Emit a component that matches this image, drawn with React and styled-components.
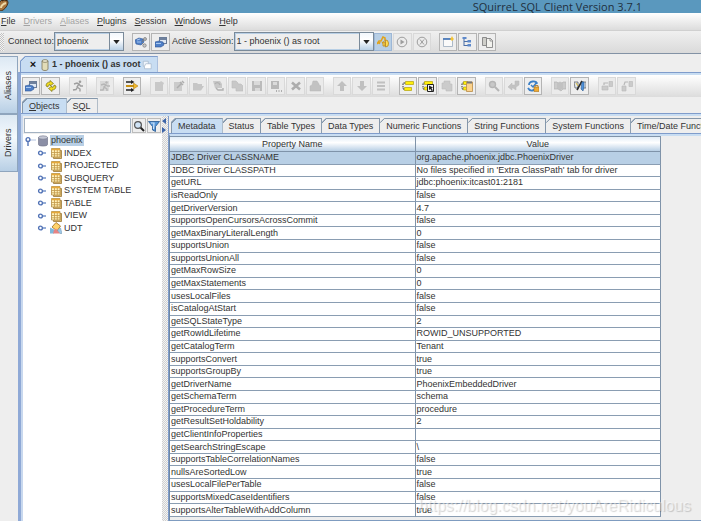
import React from "react";
import styled, { createGlobalStyle } from "styled-components";

const properties = [
  ["JDBC Driver CLASSNAME", "org.apache.phoenix.jdbc.PhoenixDriver"],
  ["JDBC Driver CLASSPATH", "No files specified in 'Extra ClassPath' tab for driver"],
  ["getURL", "jdbc:phoenix:itcast01:2181"],
  ["isReadOnly", "false"],
  ["getDriverVersion", "4.7"],
  ["supportsOpenCursorsAcrossCommit", "false"],
  ["getMaxBinaryLiteralLength", "0"],
  ["supportsUnion", "false"],
  ["supportsUnionAll", "false"],
  ["getMaxRowSize", "0"],
  ["getMaxStatements", "0"],
  ["usesLocalFiles", "false"],
  ["isCatalogAtStart", "false"],
  ["getSQLStateType", "2"],
  ["getRowIdLifetime", "ROWID_UNSUPPORTED"],
  ["getCatalogTerm", "Tenant"],
  ["supportsConvert", "true"],
  ["supportsGroupBy", "true"],
  ["getDriverName", "PhoenixEmbeddedDriver"],
  ["getSchemaTerm", "schema"],
  ["getProcedureTerm", "procedure"],
  ["getResultSetHoldability", "2"],
  ["getClientInfoProperties", ""],
  ["getSearchStringEscape", "\\"],
  ["supportsTableCorrelationNames", "false"],
  ["nullsAreSortedLow", "true"],
  ["usesLocalFilePerTable", "false"],
  ["supportsMixedCaseIdentifiers", "false"],
  ["supportsAlterTableWithAddColumn", "true"],
];

const menus = [
  { label: "File" },
  { label: "Drivers", disabled: true },
  { label: "Aliases", disabled: true },
  { label: "Plugins" },
  { label: "Session" },
  { label: "Windows" },
  { label: "Help" },
];

const metaTabs = [
  "Metadata",
  "Status",
  "Table Types",
  "Data Types",
  "Numeric Functions",
  "String Functions",
  "System Functions",
  "Time/Date Functions",
];

const nodes = ["INDEX", "PROJECTED", "SUBQUERY", "SYSTEM TABLE", "TABLE", "VIEW", "UDT"];

// "-" in front of the icon name marks a disabled button
const toolGroups = [
  ["properties", "refresh"],
  ["-run"],
  ["-runAll"],
  ["arrows"],
  ["-page", "-edit", "-folder", "-reload", "-files", "-save", "-saveAs", "-close", "-print"],
  ["-up", "-down", "-list"],
  ["bars", "barsCursor", "-barsPage", "barsPaste"],
  ["-search", "-swap", "commit"],
  ["-book", "pens"],
  ["-link", "-unlink"],
];

const shapes = {
  properties: (
    <>
      <rect x="4.500" y="1.500" width="7" height="6" fill="#dfe8f3" stroke="#6a7c98" />
      <path d="M5 3h6" stroke="#4a5f80" strokeWidth="1.500" />
      <path d="M0 6l4-1 4 1 1 3-3 2H0z" fill="#4f7fc6" stroke="#2f5596" strokeWidth=".6" />
      <path d="M1 7.500h5" stroke="#a9c8f0" />
    </>
  ),
  connect: (
    <>
      <path d="M0 4l4-2 4 1 1 3-3 3-5-1z" fill="#4f7fc6" stroke="#2f5596" strokeWidth=".6" />
      <path d="M2 4l3-1M2 6h4" stroke="#a9c8f0" />
      <path d="M7 6l2-3M7 7l2 2" stroke="#777" />
      <circle cx="10" cy="3" r="1.500" fill="#bbb" stroke="#777" strokeWidth=".7" />
      <circle cx="9.500" cy="9.500" r="1.700" fill="#c8c8c8" stroke="#777" strokeWidth=".7" />
    </>
  ),
  refresh: (
    <g fill="#f2dd1c" stroke="#777118" strokeWidth=".7">
      <path d="M1 6c0-3 2-4 4-4V.500L8.500 3.500 5 6V4.500C4 4.500 3 5 3 7z" />
      <path d="M11 6c0 3-2 4-4 4v1.500L3.500 8.500 7 6v1.500c1 0 2-.5 2-2.500z" />
    </g>
  ),
  run: (
    <>
      <circle cx="8" cy="1.800" r="1.300" fill="#8c8c8c" />
      <path d="M2 4l3-1 2 1-2 3 3 2v2.500M5.500 7L4 9.500 1 10M7 4l1.500 2H11" fill="none" stroke="#8c8c8c" strokeWidth="1.400" />
    </>
  ),
  runAll: (
    <>
      <path d="M1 1h9v10H1z" fill="#d4d4d4" />
      <circle cx="7.500" cy="2.500" r="1.200" fill="#aaa" />
      <path d="M2 5l3-1 2 1-2 2 3 2v2M5 7.500L4 10H1M7 5l1.500 1H11" fill="none" stroke="#aaa" strokeWidth="1.400" />
    </>
  ),
  arrows: (
    <>
      <path d="M0 2h6M0 10h6" stroke="#222" strokeWidth="1.300" />
      <path d="M5 0l3.500 2L5 4zM5 8l3.500 2L5 12z" fill="#222" />
      <path d="M0 6h9" stroke="#c79013" strokeWidth="2" />
      <path d="M7.500 3l4.500 3-4.500 3z" fill="#f0b92c" stroke="#a8770c" strokeWidth=".5" />
    </>
  ),
  page: <path d="M2 2h5l1-1 3 2-1 2v6H2z" fill="#c0c0c0" />,
  edit: (
    <>
      <path d="M1 2h8v9H1z" fill="#c4c4c4" />
      <path d="M4 8l5-5M7 2l3 3M9 1l2 2" fill="none" stroke="#a0a0a0" strokeWidth="1.500" />
    </>
  ),
  folder: <path d="M1 3h4l1 1h4v2h2l-3 4.500H1z" fill="#bdbdbd" />,
  reload: (
    <>
      <path d="M1 1h7l2 3v4H3z" fill="#c0c0c0" />
      <path d="M3 4c1-2 4-2 5 1M4 8l2 2h5V8" fill="none" stroke="#a4a4a4" strokeWidth="1.400" />
    </>
  ),
  files: <path d="M1 1h4l2 2v1h3l2 2v5H5V8H1z" fill="#c0c0c0" stroke="#b0b0b0" strokeWidth=".6" />,
  save: (
    <>
      <path d="M1 1h10v10H1z" fill="#b0b0b0" />
      <path d="M3 1h6v4H3zM4 8h5v3H4z" fill="#d6d6d6" />
    </>
  ),
  saveAs: (
    <>
      <path d="M1 1h8v8H1z" fill="#acacac" />
      <path d="M3 2h4v3H3z" fill="#d8d8d8" />
      <path d="M6 11h1M8.500 11h1M11 11h1" stroke="#888" strokeWidth="1.300" />
    </>
  ),
  close: <path d="M2 2.500l8 7M10 2.500l-8 7" stroke="#9e9e9e" strokeWidth="2.600" />,
  print: <path d="M3 5l1-4h4l2 3v1l2 1v5H1V6z" fill="#b9b9b9" stroke="#aaa" strokeWidth=".5" />,
  up: <path d="M6 1l5 5H8v5H4V6H1z" fill="#b6b6b6" />,
  down: <path d="M6 11L1 6h3V1h4v5h3z" fill="#b6b6b6" />,
  list: <path d="M2 2.500h8M2 6h8M2 9.500h8" stroke="#b6b6b6" strokeWidth="2.200" />,
  bars: (
    <>
      <path d="M3 3H1v6h2" fill="none" stroke="#333" strokeDasharray="1.500 1" />
      <path d="M3.500 1.500h8v3h-8zM2.500 7.500h7v3h-7z" fill="#ffee0a" stroke="#b1a20b" strokeWidth=".7" />
    </>
  ),
  barsCursor: (
    <>
      <path d="M3 3H1v6h2" fill="none" stroke="#333" strokeDasharray="1.500 1" />
      <path d="M2.500 1.500h8v3h-8zM2.500 7h5v3h-5z" fill="#ffee0a" stroke="#b1a20b" strokeWidth=".7" />
      <path d="M5.500 4.500h6v7h-6z" fill="#f4f4f4" stroke="#222" />
      <path d="M7 5.500l4 2-1.500.8L11 10.500 9.500 11 8.500 9 7 10z" fill="#222" />
    </>
  ),
  barsPage: <path d="M1 3h2V1h6v3h2v7H5V9H1z" fill="#c4c4c4" stroke="#b4b4b4" strokeWidth=".6" />,
  barsPaste: (
    <>
      <path d="M3 3H1v6h2" fill="none" stroke="#333" strokeDasharray="1.500 1" />
      <path d="M2.500 1.500h4v3h-4zM2.500 7h4v3h-4z" fill="#ffee0a" stroke="#b1a20b" strokeWidth=".7" />
      <path d="M5.500 2h6v9.500h-6z" fill="#fbd28c" stroke="#b98a44" strokeWidth=".8" />
      <path d="M6 1.500h5v2H6z" fill="#777" />
    </>
  ),
  search: (
    <>
      <circle cx="4.500" cy="4.500" r="3" fill="#c0c0c0" stroke="#a8a8a8" strokeWidth="1.400" />
      <path d="M7 7l4 4" stroke="#a8a8a8" strokeWidth="2" />
    </>
  ),
  swap: <path d="M0 7l4-4v2h3V1h4v4L8 7v3L5 8H4v2z" fill="#b9b9b9" stroke="#acacac" strokeWidth=".5" />,
  commit: (
    <>
      <path d="M2 5c0-4 7-5 8-1M1 8c2 4 7 3 8-1" fill="none" stroke="#3b7fc6" strokeWidth="1.800" />
      <path d="M4 5l2 2 4-5" fill="none" stroke="#3b7fc6" strokeWidth="1.500" />
      <path d="M7 7h5v4.500H7z" fill="#efab36" stroke="#a8721a" strokeWidth=".6" />
      <path d="M8 7V5.500h3V7" fill="none" stroke="#a8721a" strokeWidth=".8" />
    </>
  ),
  book: <path d="M0 2h3l1 1 2-1 2 1 1-1h3v7H9l-2 2-3-2H0zM4 3v6M6 3v7M8 3v6" fill="#c4c4c4" stroke="#a8a8a8" strokeWidth=".7" />,
  pens: (
    <>
      <path d="M0 2h4v6H1zM8 2h4v6H9z" fill="#dfe6ee" stroke="#555" strokeWidth=".7" />
      <path d="M8 1L3 10" stroke="#2c2c2c" strokeWidth="1.600" />
      <path d="M8 2h2v5l-1 4-2-2z" fill="#4f92dc" stroke="#26588f" strokeWidth=".6" />
      <path d="M2 3l2 3" stroke="#e4c23a" />
    </>
  ),
  link: (
    <>
      <path d="M1 6h6v4H1zM8 1.500h3.500v5H8z" fill="#c4c4c4" stroke="#acacac" strokeWidth=".6" />
      <path d="M3 5V3h4" fill="none" stroke="#acacac" strokeWidth="1.200" />
    </>
  ),
  unlink: (
    <>
      <path d="M1 6h4v5H1zM8 1.500h3.500v5H8z" fill="#c4c4c4" stroke="#acacac" strokeWidth=".6" />
      <path d="M3 5l1-3h3" fill="none" stroke="#acacac" strokeWidth="1.200" />
    </>
  ),
  keys: (
    <>
      <path d="M0 8l2-3h2l2-4 2 1v3M2 8l1-2M5 7l2-1" fill="none" stroke="#e0a31d" strokeWidth="1.600" />
      <path d="M6 6h2v4H6zM8.500 4l2 .5 1 2.500-.5 3-2.500 1z" fill="#ffdc52" stroke="#b9851a" strokeWidth=".8" />
    </>
  ),
  play: (
    <>
      <circle cx="6" cy="6" r="4.800" fill="none" stroke="#8a8a8a" />
      <path d="M4.500 3.500l4 2.500-4 2.500z" fill="#8a8a8a" />
    </>
  ),
  stop: (
    <>
      <circle cx="6" cy="6" r="4.800" fill="none" stroke="#8a8a8a" />
      <path d="M4 3.500l4 5M8 3.500l-4 5" stroke="#8a8a8a" />
    </>
  ),
  sheet: (
    <>
      <path d="M1.500 2.500h9v8h-9z" fill="#fafafa" stroke="#9aabbc" strokeWidth=".8" />
      <path d="M1 3h8" stroke="#4f7dbb" strokeWidth="1.800" />
      <path d="M10 0l1 2 1 1-1 1-1 1-1-1-1-1 1-1z" fill="#f6c332" />
    </>
  ),
  tree: (
    <>
      <path d="M3 2v8M3 5.500h4M3 9.500h4" fill="none" stroke="#4a6fa8" />
      <path d="M1.500 1h4v2h-4zM6.500 4h3.500v2.500H6.500zM6.500 8h3.500v2.500H6.500z" fill="#5f8acb" />
    </>
  ),
  copy: (
    <>
      <path d="M1.500 1.500h4v8h-4z" fill="#cfcfca" stroke="#777" strokeWidth=".8" />
      <path d="M5.500 2.500h4l2 2v7h-6z" fill="#f2f2ee" stroke="#777" strokeWidth=".8" />
      <path d="M9 2.500V5h2.500" fill="none" stroke="#777" strokeWidth=".7" />
    </>
  ),
  find: (
    <>
      <path d="M7.500 7.500l3.500 3.500" stroke="#222" strokeWidth="2" />
      <circle cx="5" cy="5" r="3.400" fill="#cfe3f6" stroke="#555" strokeWidth="1.200" />
    </>
  ),
  filter: (
    <>
      <path d="M.500 1.500h11L7.500 6.500v5l-3-1.500V6.500z" fill="#5596d8" stroke="#23558f" strokeWidth=".8" />
      <path d="M3 3h3L5.500 9" fill="none" stroke="#cfe4fa" strokeWidth="1.200" />
    </>
  ),
  database: (
    <>
      <path d="M1.500 2.500v7c0 2 9 2 9 0v-7z" fill="#8b8fa6" stroke="#74778c" strokeWidth=".7" />
      <ellipse cx="6" cy="2.500" rx="4.500" ry="1.700" fill="#c3c6d4" stroke="#74778c" strokeWidth=".6" />
    </>
  ),
  drum: (
    <>
      <path d="M3 2v8c0 2 6 2 6 0V2z" fill="#e2dcb8" stroke="#7b7558" strokeWidth=".8" />
      <ellipse cx="6" cy="2" rx="3" ry="1.300" fill="#f6f2dc" stroke="#7b7558" strokeWidth=".8" />
    </>
  ),
  tables: (
    <>
      <path d="M3.500 3.500h8v8h-8z" fill="#d9b66c" stroke="#9c7a38" strokeWidth=".8" />
      <path d="M1.500 1.500h8.500v8.500H1.500z" fill="#fff0b8" stroke="#ae8a42" strokeWidth=".8" />
      <path d="M1.500 2.500H10" stroke="#e8a93a" strokeWidth="1.500" />
      <path d="M1.500 5.500H10M1.500 7.800H10M4.500 3v7M7.300 3v7" stroke="#c39848" strokeWidth=".8" />
    </>
  ),
  type: (
    <>
      <path d="M0 5.500l4 2v4H0z" fill="#7eb9dc" />
      <path d="M2 5l4-4.500L10.500 4 7 9z" fill="#ffd36a" stroke="#a06b1c" strokeWidth=".8" />
      <path d="M4 8l2-1.500L10 11.500H3z" fill="#e88484" />
      <path d="M7.500 8l3-2 1.500 5.500h-2z" fill="#9dc8e8" stroke="#6d93ae" strokeWidth=".5" />
    </>
  ),
  handle: (
    <>
      <path d="M5 6h4" stroke="#7f9ccf" strokeWidth="1.600" />
      <circle cx="3.500" cy="6" r="1.900" fill="#fff" stroke="#5273b6" strokeWidth="1.400" />
    </>
  ),
  handleOpen: (
    <>
      <path d="M6 5h6" stroke="#b4c4e0" />
      <path d="M4 6v5" stroke="#5273b6" strokeWidth="1.400" />
      <circle cx="4" cy="4.500" r="1.900" fill="#fff" stroke="#5273b6" strokeWidth="1.400" />
    </>
  ),
  windows: (
    <>
      <path d="M1.500 1.500h6v6h-6z" fill="#eef4fb" stroke="#9eb0c6" strokeWidth=".8" />
      <path d="M4.500 4.500h6.500v6H3v-3z" fill="#fff" stroke="#9eb0c6" strokeWidth=".8" />
    </>
  ),
  squirrel: (
    <>
      <path d="M0 11c0-5 1-8 4-10 3-2 6 0 6 3-1 4-4 7-7 8z" fill="#a9763f" stroke="#4b3219" />
      <path d="M3 9c0-3 2-4 5-5" fill="none" stroke="#ecd9a8" strokeWidth="2" />
      <path d="M4 2c2-2 4-1 5 0" fill="none" stroke="#3b2613" strokeWidth="1.300" />
    </>
  ),
};

const Icon = ({ name, size = 12 }) => (
  <svg width={size} height={size} viewBox="0 0 12 12" aria-hidden="true">
    {shapes[name]}
  </svg>
);

const Combo = ({ id, value, wide }) => (
  <ComboBox $wide={wide}>
    <select id={id} defaultValue={value}>
      <option>{value}</option>
    </select>
    <span>
      <svg width="7" height="4" viewBox="0 0 8 5" aria-hidden="true">
        <path d="M0 0h8L4 5z" fill="#222" />
      </svg>
    </span>
  </ComboBox>
);

const Mnemonic = ({ text, at = 0 }) => (
  <>
    {text.slice(0, at)}
    <u>{text[at]}</u>
    {text.slice(at + 1)}
  </>
);

const App = () => {
  return (
    <Page>
      <GlobalStyle />
      <TitleBar>
        <Icon name="squirrel" />
        <h1>SQuirreL SQL Client Version 3.7.1</h1>
      </TitleBar>
      <MenuBar>
        {menus.map((menu) => (
          <button key={menu.label} type="button" disabled={menu.disabled}>
            <Mnemonic text={menu.label} />
          </button>
        ))}
      </MenuBar>
      <SessionBar>
        <Grip />
        <label htmlFor="alias">Connect to:</label>
        <Combo id="alias" value="phoenix" />
        <ButtonGroup>
          <ToolButton aria-label="Connect">
            <Icon name="connect" />
          </ToolButton>
          <ToolButton aria-label="Alias properties">
            <Icon name="properties" />
          </ToolButton>
        </ButtonGroup>
        <label htmlFor="session">Active Session:</label>
        <Combo id="session" value="1 - phoenix () as root" wide />
        <ButtonGroup $flush>
          <ToolButton $pressed aria-label="Auto commit">
            <Icon name="keys" />
          </ToolButton>
          <ToolButton disabled aria-label="Commit">
            <Icon name="play" />
          </ToolButton>
          <ToolButton disabled aria-label="Rollback">
            <Icon name="stop" />
          </ToolButton>
        </ButtonGroup>
        <ButtonGroup>
          <ToolButton aria-label="New SQL worksheet">
            <Icon name="sheet" />
          </ToolButton>
          <ToolButton aria-label="Object tree">
            <Icon name="tree" />
          </ToolButton>
          <ToolButton aria-label="Copy">
            <Icon name="copy" />
          </ToolButton>
        </ButtonGroup>
      </SessionBar>
      <Workspace>
        <Dock>
          <button type="button">Aliases</button>
          <button type="button">Drivers</button>
        </Dock>
        <Desktop>
          <FrameTabs>
            <FrameTab>
              <button type="button" aria-label="Close session">
                ×
              </button>
              <Icon name="drum" />
              <strong>1 - phoenix () as root</strong>
              <Icon name="windows" size={10} />
            </FrameTab>
          </FrameTabs>
          <Frame>
            <ToolBar>
              {toolGroups.map((group) => (
                <ButtonGroup key={group[0]} $flush>
                  {group.map((entry) => {
                    const name = entry.replace("-", "");
                    return (
                      <ToolButton
                        key={name}
                        aria-label={name}
                        disabled={entry.startsWith("-")}
                      >
                        <Icon name={name} />
                      </ToolButton>
                    );
                  })}
                </ButtonGroup>
              ))}
            </ToolBar>
            <TabRow>
              <Tab $active>
                <Mnemonic text="Objects" />
              </Tab>
              <Tab>
                <Mnemonic text="SQL" at={1} />
              </Tab>
            </TabRow>
            <SplitPane>
              <ObjectPane>
                <SearchRow>
                  <input type="text" aria-label="Find object" />
                  <button type="button" aria-label="Find">
                    <Icon name="find" />
                  </button>
                  <button type="button" aria-label="Filter">
                    <Icon name="filter" />
                  </button>
                </SearchRow>
                <Tree>
                  <TreeNode>
                    <Icon name="handleOpen" />
                    <Icon name="database" />
                    <NodeLabel $selected>phoenix</NodeLabel>
                  </TreeNode>
                  {nodes.map((node) => (
                    <TreeNode key={node} $child>
                      <Icon name="handle" />
                      <Icon name={node === "UDT" ? "type" : "tables"} />
                      <NodeLabel>{node}</NodeLabel>
                    </TreeNode>
                  ))}
                </Tree>
              </ObjectPane>
              <Divider>
                <svg width="4" height="16" viewBox="0 0 4 16" aria-hidden="true">
                  <path d="M4 0v6L0 3zM0 9v6l4-3z" fill="#3c64a8" />
                </svg>
              </Divider>
              <DetailPane>
                <TabRow $detail>
                  {metaTabs.map((tab, index) => (
                    <Tab key={tab} $active={index === 0}>
                      {tab}
                    </Tab>
                  ))}
                </TabRow>
                <TableArea>
                  <PropertyTable>
                    <thead>
                      <tr>
                        <th>Property Name</th>
                        <th>Value</th>
                      </tr>
                    </thead>
                    <tbody>
                      {properties.map(([name, value]) => (
                        <tr key={name}>
                          <td>{name}</td>
                          <td>{value}</td>
                        </tr>
                      ))}
                    </tbody>
                  </PropertyTable>
                </TableArea>
              </DetailPane>
            </SplitPane>
          </Frame>
        </Desktop>
      </Workspace>
      <Watermark>https://blog.csdn.net/youAreRidiculous</Watermark>
    </Page>
  );
};

const GlobalStyle = createGlobalStyle`
  * {
    box-sizing: border-box;
    margin: 0;
    padding: 0;
  }
  body {
    background: #fff;
    overflow: hidden;
  }
  body, button, input, select {
    font-family: "Liberation Sans", Arial, sans-serif;
    font-size: 9px;
    line-height: 11px;
    color: #333;
  }
  svg {
    display: block;
    flex: none;
  }
`;

const Page = styled.div`
  position: relative;
  height: 100vh;
  padding-bottom: 3px;
  display: flex;
  flex-direction: column;
  overflow: hidden;
`;

const TitleBar = styled.header`
  flex: none;
  height: 13px;
  padding-right: 59px;
  display: flex;
  align-items: center;
  justify-content: space-between;
  background: #5a98be;
  overflow: hidden;
  svg {
    margin-top: -4px;
    margin-left: -2px;
  }
  h1 {
    font: 400 11px/13px "Open Sans", "Noto Sans", sans-serif;
    color: #1f2f3d;
    margin-top: -1px;
  }
`;

const MenuBar = styled.nav`
  flex: none;
  height: 18px;
  padding-left: 1px;
  display: flex;
  align-items: center;
  gap: 8px;
  background: linear-gradient(#fff, #dcdcdc);
  border-bottom: 1px solid #d0d0d0;
  button {
    border: none;
    background: none;
    &:disabled {
      color: #a3a3a3;
    }
  }
`;

const SessionBar = styled.div`
  flex: none;
  height: 23px;
  padding-bottom: 1px;
  display: flex;
  align-items: center;
  background: linear-gradient(#f0f0f0, #dadada);
  border-bottom: 1px solid #8392a5;
  label {
    white-space: nowrap;
  }
`;

const Grip = styled.span`
  width: 4px;
  height: 18px;
  margin-right: 4px;
  background: repeating-conic-gradient(#c2c2c2 0 25%, #f4f4f4 0 50%) 0 0 / 2px 2px;
`;

const ComboBox = styled.div`
  display: grid;
  width: ${(props) => (props.$wide ? "140px" : "70px")};
  height: 19px;
  select {
    grid-area: 1 / 1;
    appearance: none;
    border: 1px solid #7a8a99;
    outline: 1px solid #b8cfe5;
    outline-offset: -2px;
    background: #eee;
    padding-left: 2px;
  }
  span {
    grid-area: 1 / 1;
    justify-self: end;
    width: 15px;
    display: flex;
    align-items: center;
    justify-content: center;
    border: 1px solid #7a8a99;
    background: linear-gradient(#f2f7fc, #fff 40%, #b8cfe5);
    pointer-events: none;
  }
`;

const ButtonGroup = styled.div`
  display: flex;
  gap: 1px;
  margin: ${(props) => (props.$flush ? "0" : "0 2px 0 8px")};
`;

const ToolButton = styled.button.attrs({ type: "button" })`
  width: 18px;
  height: 18px;
  display: flex;
  align-items: center;
  justify-content: center;
  border: 1px solid ${(props) => (props.$pressed ? "#9db7d6" : "#b4b4b4")};
  background: ${(props) => (props.$pressed ? "#b8cfe5" : "#eee")};
  &:nth-child(even) {
    width: 19px;
  }
  &:disabled {
    border-color: #d9d9d9;
    background: #ebebeb;
    svg {
      opacity: 0.8;
    }
  }
`;

const Workspace = styled.div`
  flex: 1;
  min-height: 0;
  display: flex;
  background: #eee;
`;

const Dock = styled.aside`
  flex: none;
  width: 18px;
  padding-top: 2px;
  button {
    display: block;
    width: 18px;
    height: 58px;
    writing-mode: vertical-rl;
    transform: rotate(180deg);
    border: 1px solid #8fa5bd;
    border-right: none;
    background: linear-gradient(#b8cfe5, #f4f9fd 60%, #dce8f3);
  }
`;

const Desktop = styled.main`
  flex: 1;
  min-width: 0;
  display: flex;
  flex-direction: column;
`;

const FrameTabs = styled.div`
  flex: none;
  height: 18px;
  padding: 2px 0 0 2px;
  display: flex;
`;

const FrameTab = styled.div`
  display: flex;
  align-items: center;
  gap: 1px;
  padding: 0 5px 0 7px;
  border: 1px solid #7f9ccb;
  border-bottom: none;
  background: linear-gradient(135deg, #7f9ccb 3px, transparent 3px), #c8ddf2;
  clip-path: polygon(5px 0, 100% 0, 100% 100%, 0 100%, 0 5px);
  button {
    width: 10px;
    border: none;
    background: none;
    font-size: 11px;
    font-weight: 700;
    color: #111;
  }
  strong {
    white-space: nowrap;
  }
`;

const Frame = styled.section`
  flex: 1;
  min-height: 0;
  display: flex;
  flex-direction: column;
  border-left: 3px solid #8fa9d6;
  border-top: 1px solid #7f9ccb;
`;

const ToolBar = styled.div`
  flex: none;
  height: 24px;
  padding: 0 0 1px 1px;
  display: flex;
  align-items: center;
  gap: 9px;
  border-top: 2px solid #c8ddf2;
  background: linear-gradient(#fff, #dcdcdc);
`;

const TabRow = styled.div`
  flex: none;
  height: ${(props) => (props.$detail ? "18px" : "17px")};
  padding: ${(props) => (props.$detail ? "2px 0 0 2px" : "1px 0 0 1px")};
  display: flex;
  overflow: hidden;
  background: #eee;
  border-bottom: 1px solid #7f9ccb;
`;

const Tab = styled.button.attrs({ type: "button" })`
  flex: none;
  padding: 0 6px;
  white-space: nowrap;
  border: 1px solid #8497ab;
  border-bottom: none;
  border-left-width: ${(props) => (props.$active ? "1px" : "0")};
  background: linear-gradient(135deg, #8497ab 3px, transparent 3px),
    ${(props) => (props.$active ? "#c8ddf2" : "#eee")};
  clip-path: polygon(4px 0, 100% 0, 100% 100%, 0 100%, 0 4px);
`;

const SplitPane = styled.div`
  flex: 1;
  min-height: 0;
  display: flex;
  border-top: 2px solid #c8ddf2;
  border-left: 2px solid #c8d8ee;
`;

const ObjectPane = styled.div`
  flex: none;
  width: 139px;
  background: #fff;
`;

const SearchRow = styled.div`
  display: flex;
  gap: 1px;
  height: 18px;
  padding: 2px 1px 1px;
  background: #eee;
  input {
    flex: 1;
    min-width: 0;
    border: 1px solid #a3b2c2;
    background: #fff;
  }
  button {
    width: 14px;
    display: flex;
    align-items: center;
    justify-content: center;
    border: 1px solid #bbb;
    background: #eee;
  }
`;

const Tree = styled.ul`
  list-style: none;
`;

const TreeNode = styled.li`
  height: 12px;
  display: flex;
  align-items: center;
  gap: 1px;
  padding-left: ${(props) => (props.$child ? "14px" : "1px")};
  &:nth-child(odd) {
    height: 13px;
  }
`;

const NodeLabel = styled.span`
  padding: 0 1px;
  background: ${(props) => (props.$selected ? "#b8cfe5" : "transparent")};
`;

const Divider = styled.div`
  flex: none;
  width: 6px;
  padding-top: 2px;
  background: repeating-conic-gradient(#d0d0d0 0 25%, #f4f4f4 0 50%) 0 0 / 2px 2px;
`;

const DetailPane = styled.div`
  flex: 1;
  min-width: 0;
  display: flex;
  flex-direction: column;
  border-left: 1px solid #7f9ccb;
`;

const TableArea = styled.div`
  flex: 1;
  min-height: 0;
  padding: 0 40px 3px 0;
  border-top: 2px solid #c8ddf2;
  border-left: 1px solid #6f87a3;
  border-bottom: 1px solid #7f9cc0;
`;

const PropertyTable = styled.table`
  width: 100%;
  height: 100%;
  table-layout: fixed;
  border-spacing: 0;
  th {
    height: 16px;
    font-weight: 400;
    border: 1px solid #7f93a9;
    border-left: none;
    background: linear-gradient(#e2edf7, #fff 40%, #b8cfe5);
  }
  td {
    padding-left: 1px;
    background: #fff;
    border-right: 1px solid #7f93a9;
    border-bottom: 1px solid #8a9db2;
    white-space: nowrap;
    overflow: hidden;
  }
  tbody tr:first-child td {
    background: #b8cfe5;
  }
`;

const Watermark = styled.p`
  position: absolute;
  right: 10px;
  bottom: 9px;
  font-size: 16px;
  line-height: 18px;
  color: rgba(255, 255, 255, 0.5);
  text-shadow: 1px 1px 1px rgba(0, 0, 0, 0.18);
  pointer-events: none;
`;

export default App;
